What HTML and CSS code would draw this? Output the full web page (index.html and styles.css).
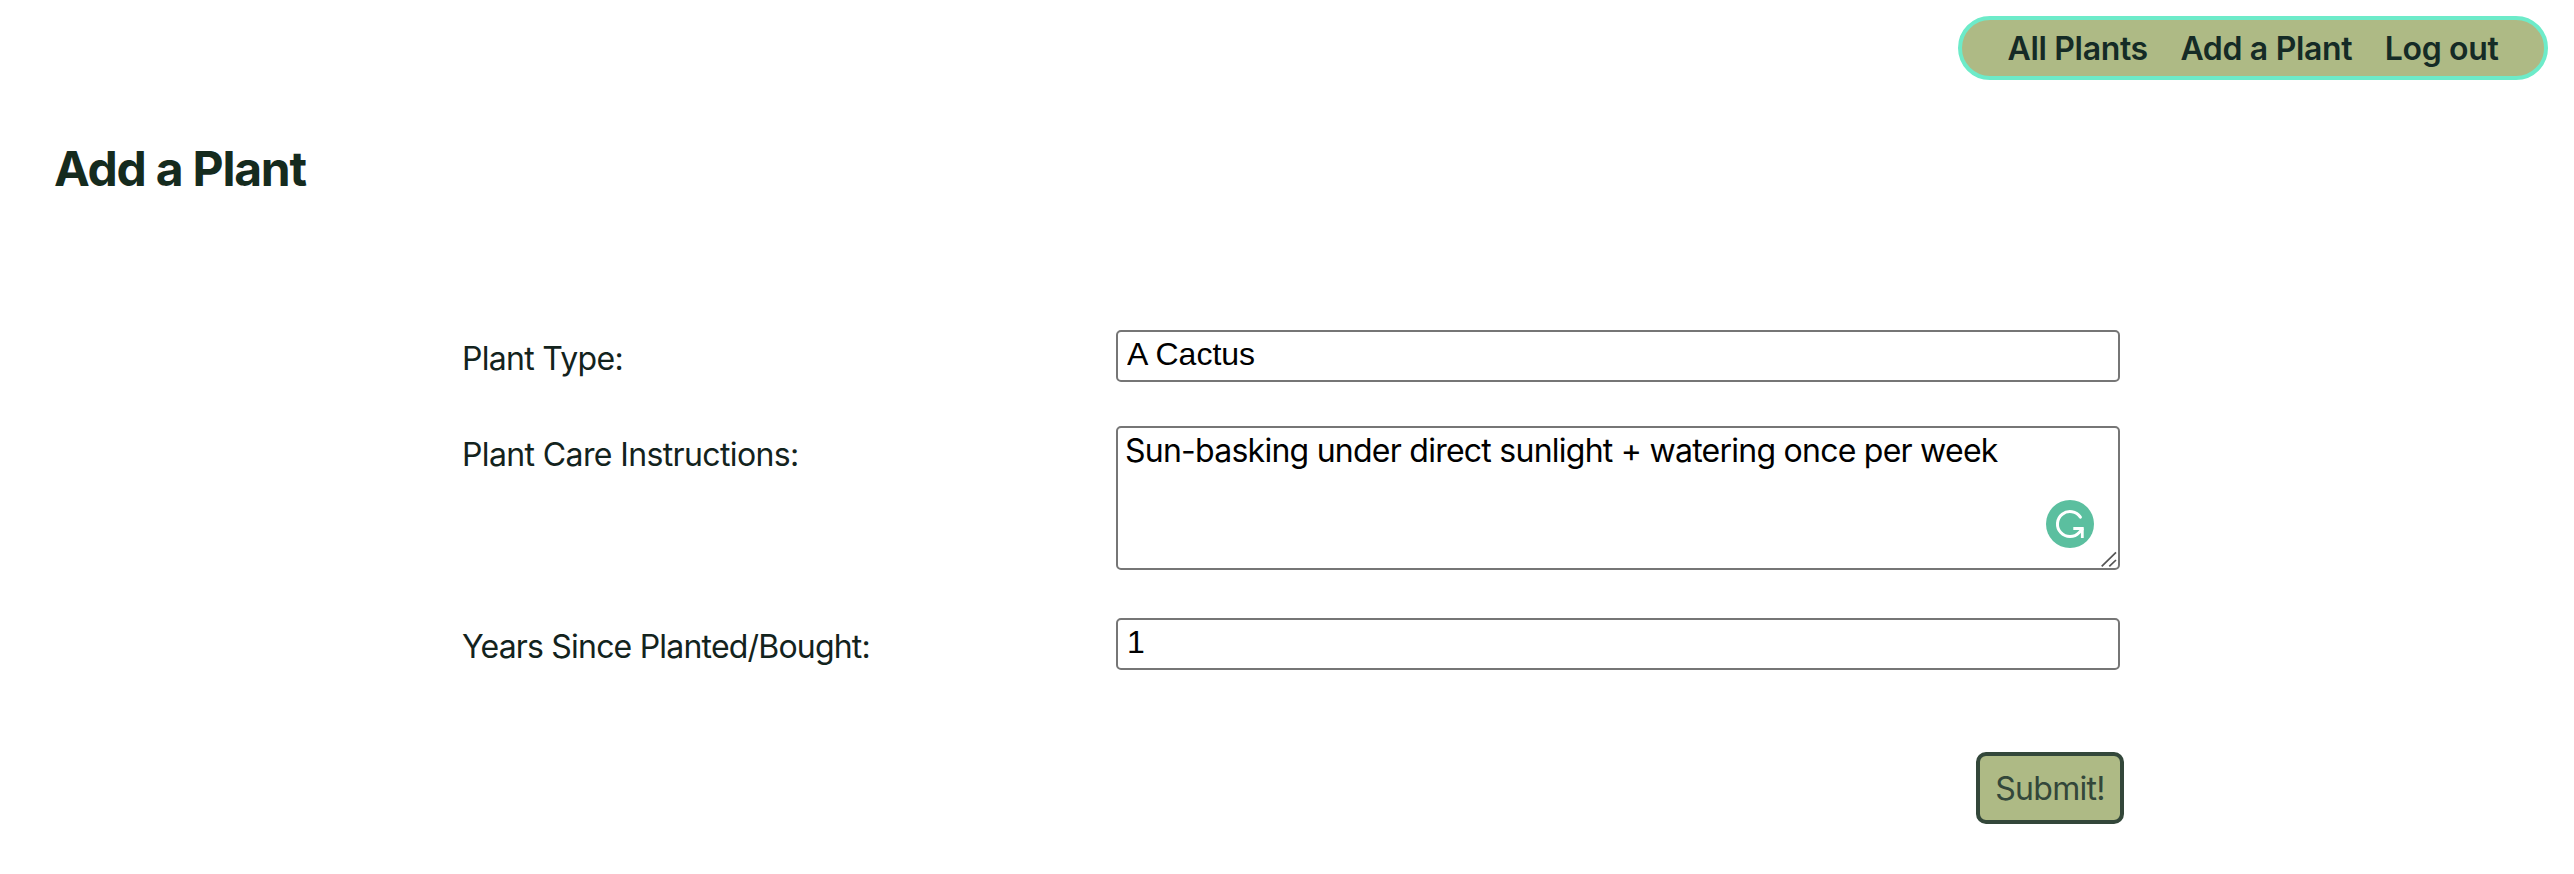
FILE: index.html
```
<!DOCTYPE html>
<html lang="en">
<head>
<meta charset="utf-8">
<title>Add a Plant</title>
<link rel="stylesheet" href="styles.css">
</head>
<body>
<header class="header">
<nav class="nav"><a class="link">All Plants</a><a class="link">Add a Plant</a><a class="link">Log out</a></nav>
</header>
<main>
<h1 class="title">Add a Plant</h1>
<form class="form">
<label class="label label-type" for="type">Plant Type:</label>
<input class="field" id="type" type="text" value="A Cactus">
<label class="label label-care">Plant Care Instructions:</label>
<div class="care">
<div class="field area">Sun-basking under direct sunlight + watering once per week</div>
<svg class="badge" viewBox="0 0 48 48"><circle cx="24" cy="24" r="24" fill="#5bbf9f"/><path d="M34.4 17.2A12.5 12.5 0 1 0 33.2 32.5L36.2 29.3" fill="none" stroke="#fff" stroke-width="3" stroke-linecap="round"/><path d="M27.3 28.5H36.3V38" fill="none" stroke="#fff" stroke-width="2.8"/></svg>
<svg class="grip" viewBox="0 0 16 16"><path d="M.7 15.3L15 1.3M8.3 15.3L15 9" stroke="#555" stroke-width="1.7"/></svg>
</div>
<label class="label label-years" for="years">Years Since Planted/Bought:</label>
<input class="field" id="years" type="text" value="1">
<button class="submit" type="button">Submit!</button>
</form>
</main>
</body>
</html>
```
FILE: styles.css
```
* { box-sizing: border-box; }
body { margin: 0; background: #fff; color: #13231d; font: 32px/40px Inter, "Liberation Sans", sans-serif; }
.header { display: flex; justify-content: flex-end; padding: 16px 26px 0; }
.nav { display: flex; gap: 32.5px; width: 590px; height: 64px; padding: 9px 0 0 45.5px; border: 4px solid #6debc9; border-radius: 32px; background: #aeba85; }
.link { color: #152b26; font-weight: 600; letter-spacing: -0.33px; white-space: nowrap; }
.title { margin: 60px 0 0 54px; color: #152b1e; font-size: 48px; line-height: 58px; font-weight: 700; letter-spacing: -1.22px; }
.form { display: grid; grid-template-columns: 654px 1004px; padding: 132px 0 0 462px; align-items: start; }
.label { padding-top: 9px; white-space: nowrap; }
.label-type { letter-spacing: -0.7px; }
.label-care { letter-spacing: -0.62px; }
.label-years { letter-spacing: -0.8px; }
.field { width: 1004px; height: 52px; margin: 0 0 44px; padding: 0 9px 4px; border: 2px solid #767676; border-radius: 5px; background: #fff; color: #000; font: 32px/40px "Liberation Sans", sans-serif; }
.care { position: relative; }
.area { height: 144px; margin-bottom: 48px; padding: 3px 7px; font-family: Inter, sans-serif; letter-spacing: -0.75px; white-space: nowrap; }
.badge { position: absolute; left: 930px; top: 74px; width: 48px; height: 48px; }
.grip { position: absolute; left: 985px; top: 125px; width: 16px; height: 16px; }
.submit { grid-column: 2; justify-self: end; width: 148px; height: 72px; margin: 38px -4px 0 0; padding: 2px 0 0; border: 4px solid #33473a; border-radius: 10px; background: #aeba85; color: #33473a; font: 32px/40px Inter, sans-serif; letter-spacing: -0.7px; white-space: nowrap; }
```
